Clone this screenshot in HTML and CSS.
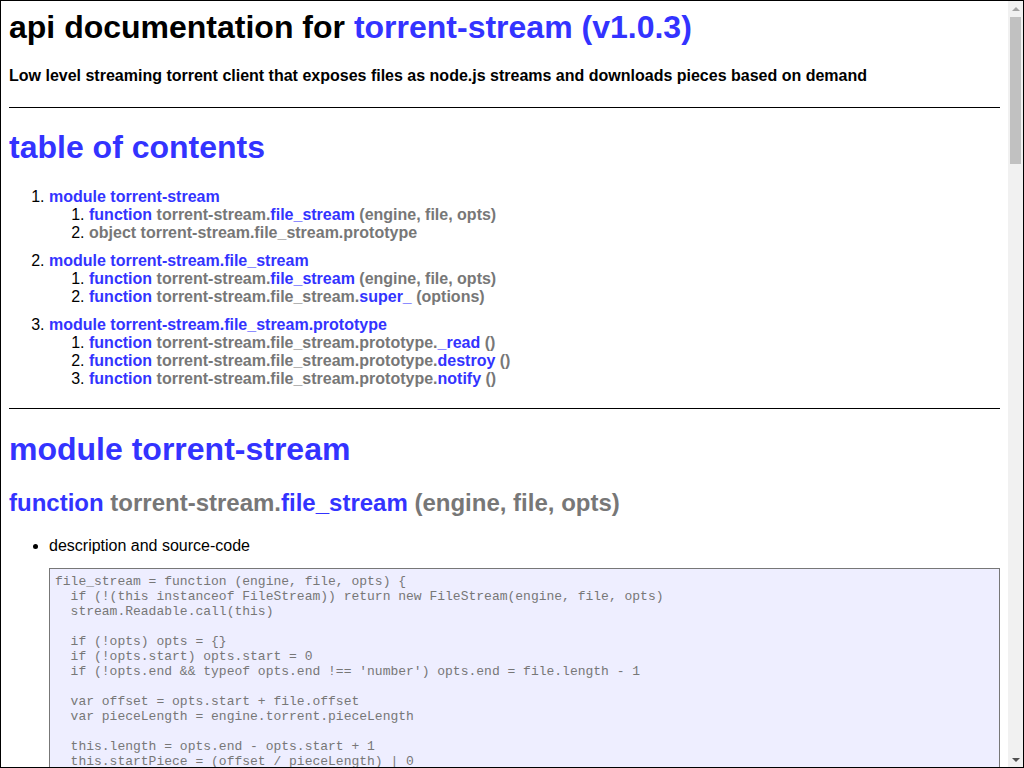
FILE: index.html
```html
<!DOCTYPE html>
<html lang="en">
<head>
<meta charset="utf-8">
<title>api documentation for torrent-stream (v1.0.3)</title>
<link rel="stylesheet" href="styles.css">
</head>
<body>
<div class="frame">
<div class="scroller">
<div class="apidocDiv">
<h1 class="apidocTitle">api documentation for <a href="#">torrent-stream (v1.0.3)</a></h1>
<h4>Low level streaming torrent client that exposes files as node.js streams and downloads pieces based on demand</h4>

<div class="apidocSectionDiv">
<h1><a href="#">table of contents</a></h1>
<ol class="apidocToc">
  <li class="apidocModuleLi"><a href="#">module torrent-stream</a>
    <ol>
      <li><a href="#">function <span class="apidocSignatureSpan">torrent-stream.</span>file_stream<span class="apidocSignatureSpan"> (engine, file, opts)</span></a></li>
      <li><span class="apidocSignatureSpan">object torrent-stream.file_stream.prototype</span></li>
    </ol>
  </li>
  <li class="apidocModuleLi"><a href="#">module torrent-stream.file_stream</a>
    <ol>
      <li><a href="#">function <span class="apidocSignatureSpan">torrent-stream.</span>file_stream<span class="apidocSignatureSpan"> (engine, file, opts)</span></a></li>
      <li><a href="#">function <span class="apidocSignatureSpan">torrent-stream.file_stream.</span>super_<span class="apidocSignatureSpan"> (options)</span></a></li>
    </ol>
  </li>
  <li class="apidocModuleLi"><a href="#">module torrent-stream.file_stream.prototype</a>
    <ol>
      <li><a href="#">function <span class="apidocSignatureSpan">torrent-stream.file_stream.prototype.</span>_read<span class="apidocSignatureSpan"> ()</span></a></li>
      <li><a href="#">function <span class="apidocSignatureSpan">torrent-stream.file_stream.prototype.</span>destroy<span class="apidocSignatureSpan"> ()</span></a></li>
      <li><a href="#">function <span class="apidocSignatureSpan">torrent-stream.file_stream.prototype.</span>notify<span class="apidocSignatureSpan"> ()</span></a></li>
    </ol>
  </li>
</ol>
</div>

<div class="apidocSectionDiv">
<h1 class="apidocModuleH1"><a href="#">module torrent-stream</a></h1>
<h2><a href="#">function <span class="apidocSignatureSpan">torrent-stream.</span>file_stream<span class="apidocSignatureSpan"> (engine, file, opts)</span></a></h2>
<ul>
<li>description and source-code<pre class="apidocCodePre">file_stream = function (engine, file, opts) {
  if (!(this instanceof FileStream)) return new FileStream(engine, file, opts)
  stream.Readable.call(this)

  if (!opts) opts = {}
  if (!opts.start) opts.start = 0
  if (!opts.end &amp;&amp; typeof opts.end !== 'number') opts.end = file.length - 1

  var offset = opts.start + file.offset
  var pieceLength = engine.torrent.pieceLength

  this.length = opts.end - opts.start + 1
  this.startPiece = (offset / pieceLength) | 0
  this.endPiece = ((opts.end + file.offset) / pieceLength) | 0
  this._destroyed = false
  this._engine = engine
  this._piece = this.startPiece
  this._missing = this.length
  this._reading = false
  this._notifying = false
  this._critical = Math.min(1024 * 1024 / pieceLength, 2) | 0
  this._offset = offset - (this.startPiece * pieceLength)
}</pre></li>
<li>example usage<pre class="apidocCodePre">n/a</pre></li>
</ul>
<h2><span class="apidocSignatureSpan">object torrent-stream.file_stream.prototype</span></h2>
</div>

<div class="apidocSectionDiv">
<h1 class="apidocModuleH1"><a href="#">module torrent-stream.file_stream</a></h1>
<h2><a href="#">function <span class="apidocSignatureSpan">torrent-stream.</span>file_stream<span class="apidocSignatureSpan"> (engine, file, opts)</span></a></h2>
<ul>
<li>description and source-code<pre class="apidocCodePre">file_stream = function (engine, file, opts) {
  if (!(this instanceof FileStream)) return new FileStream(engine, file, opts)
  stream.Readable.call(this)

  if (!opts) opts = {}
  if (!opts.start) opts.start = 0
  if (!opts.end &amp;&amp; typeof opts.end !== 'number') opts.end = file.length - 1

  var offset = opts.start + file.offset
  var pieceLength = engine.torrent.pieceLength

  this.length = opts.end - opts.start + 1
  this.startPiece = (offset / pieceLength) | 0
  this.endPiece = ((opts.end + file.offset) / pieceLength) | 0
  this._destroyed = false
  this._engine = engine
  this._piece = this.startPiece
  this._missing = this.length
  this._reading = false
  this._notifying = false
  this._critical = Math.min(1024 * 1024 / pieceLength, 2) | 0
  this._offset = offset - (this.startPiece * pieceLength)
}</pre></li>
<li>example usage<pre class="apidocCodePre">n/a</pre></li>
</ul>
<h2><a href="#">function <span class="apidocSignatureSpan">torrent-stream.file_stream.</span>super_<span class="apidocSignatureSpan"> (options)</span></a></h2>
<ul>
<li>description and source-code<pre class="apidocCodePre">function Readable(options) {
  if (!(this instanceof Readable))
    return new Readable(options);

  this._readableState = new ReadableState(options, this);

  // legacy
  this.readable = true;

  if (options &amp;&amp; typeof options.read === 'function')
    this._read = options.read;

  Stream.call(this);
}</pre></li>
<li>example usage<pre class="apidocCodePre">n/a</pre></li>
</ul>
</div>

<div class="apidocSectionDiv">
<h1 class="apidocModuleH1"><a href="#">module torrent-stream.file_stream.prototype</a></h1>
<h2><a href="#">function <span class="apidocSignatureSpan">torrent-stream.file_stream.prototype.</span>_read<span class="apidocSignatureSpan"> ()</span></a></h2>
<ul>
<li>description and source-code<pre class="apidocCodePre">_read = function () {
  if (this._reading) return
  this._reading = true
  this.notify()
}</pre></li>
<li>example usage<pre class="apidocCodePre">n/a</pre></li>
</ul>
<h2><a href="#">function <span class="apidocSignatureSpan">torrent-stream.file_stream.prototype.</span>destroy<span class="apidocSignatureSpan"> ()</span></a></h2>
<ul>
<li>description and source-code<pre class="apidocCodePre">destroy = function () {
  if (this._destroyed) return
  this._destroyed = true
  this.emit('close')
}</pre></li>
<li>example usage<pre class="apidocCodePre">n/a</pre></li>
</ul>
<h2><a href="#">function <span class="apidocSignatureSpan">torrent-stream.file_stream.prototype.</span>notify<span class="apidocSignatureSpan"> ()</span></a></h2>
<ul>
<li>description and source-code<pre class="apidocCodePre">notify = function () {
  if (!this._reading || !this._missing) return
  if (!this._engine.bitfield.get(this._piece)) return this._engine.critical(this._piece, this._critical)

  var self = this

  if (this._notifying) return
  this._notifying = true
  this._engine.store.get(this._piece++, function (err, buffer) {
    self._notifying = false

    if (self._destroyed || !self._reading) return

    if (err) return self.destroy(err)

    if (self._offset) {
      buffer = buffer.slice(self._offset)
      self._offset = 0
    }

    if (self._missing &lt; buffer.length) {
      buffer = buffer.slice(0, self._missing)
    }

    self._missing -= buffer.length

    if (!self._missing) {
      self.push(buffer)
      self.push(null)
      return
    }

    self._reading = false
    self.push(buffer)
  })
}</pre></li>
<li>example usage<pre class="apidocCodePre">n/a</pre></li>
</ul>
</div>

<div class="apidocFooterDiv">
[ this document was created with <a href="#">utility2</a> ]
</div>
</div>
</div>
<div class="scrollbar" aria-hidden="true">
  <div class="sbButton"><span class="sbArrowUp"></span></div>
  <div class="sbTrack"><div class="sbThumb"></div></div>
  <div class="sbButton"><span class="sbArrowDown"></span></div>
</div>
</div>
</body>
</html>
```

FILE: styles.css
```css
html, body {
  margin: 0;
  padding: 0;
  height: 100%;
  overflow: hidden;
}

.frame {
  box-sizing: border-box;
  height: 100vh;
  border: 1px solid #000;
  display: flex;
  background: #fff;
}

.scroller {
  flex: 1;
  min-width: 0;
  overflow: hidden;
  padding: 8px;
}

.scrollbar {
  flex: 0 0 15px;
  width: 15px;
  background: #f1f1f1;
  display: flex;
  flex-direction: column;
}

.sbButton {
  flex: 0 0 15px;
  height: 15px;
  display: flex;
  align-items: center;
  justify-content: center;
}

.sbArrowUp,
.sbArrowDown {
  width: 0;
  height: 0;
  border-left: 4px solid transparent;
  border-right: 4px solid transparent;
}

.sbArrowUp {
  border-bottom: 4px solid #a3a3a3;
}

.sbArrowDown {
  border-top: 4px solid #505050;
}

.sbTrack {
  flex: 1;
  padding: 1px 2px 0;
}

.sbThumb {
  height: 147px;
  background: #c1c1c1;
}

.apidocDiv {
  color: #000;
  font-family: "Liberation Sans", Arial, Helvetica, sans-serif;
  font-size: 16px;
}

.apidocDiv h1 {
  font-size: 32px;
  margin: 21.44px 0;
}

.apidocDiv h1.apidocTitle {
  margin-top: 0;
}

.apidocDiv h1.apidocModuleH1 {
  margin-top: 22px;
}

.apidocDiv h2 {
  font-size: 24px;
  margin: 19.92px 0;
}

.apidocDiv h4 {
  font-size: 16px;
  margin: 21.28px 0;
}

.apidocDiv ol,
.apidocDiv ul {
  margin: 16px 0;
  padding-left: 40px;
}

.apidocDiv ol ol {
  margin: 0;
}

.apidocDiv a {
  color: #33f;
  font-weight: bold;
  text-decoration: none;
}

.apidocSignatureSpan {
  color: #777;
  font-weight: bold;
}

.apidocModuleLi {
  margin-top: 10px;
}

.apidocSectionDiv {
  border-top: 1px solid #000;
  margin-top: 20px;
}

.apidocCodePre {
  background: #eef;
  border: 1px solid #777;
  color: #777;
  font-family: "Liberation Mono", "Courier New", monospace;
  font-size: 13px;
  line-height: 15px;
  margin: 13px 0;
  padding: 5px;
  white-space: pre-wrap;
  overflow-wrap: break-word;
}

.apidocFooterDiv {
  margin-top: 20px;
  text-align: center;
}
```
